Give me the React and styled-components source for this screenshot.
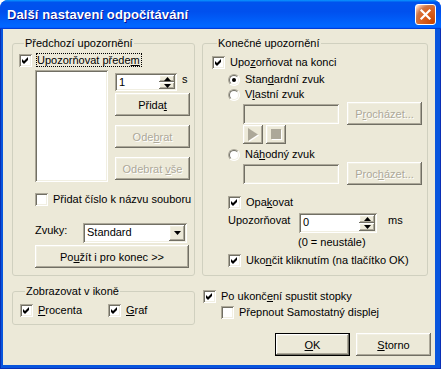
import React from 'react';
import styled, { createGlobalStyle, css } from 'styled-components';

const GlobalStyle = createGlobalStyle`
  html, body { margin: 0; padding: 0; background: #fff; }
  body {
    font-family: "Liberation Sans", Arial, sans-serif;
    font-size: 11px;
    color: #000;
  }
  * { box-sizing: border-box; }
`;

const raised = css`
  box-shadow: inset -1px -1px #716f64, inset 1px 1px #fff, inset -2px -2px #aca899, inset 2px 2px #f1efe2;
`;

const sunken = css`
  box-shadow: inset 1px 1px #aca899, inset -1px -1px #fff, inset 2px 2px #716f64, inset -2px -2px #f1efe2;
`;

const Window = styled.div`
  width: 441px;
  height: 369px;
  display: flex;
  flex-direction: column;
  border-radius: 8px 8px 0 0;
  overflow: hidden;
  background: #0855dd;
`;

const TitleBar = styled.div`
  height: 29px;
  flex: none;
  display: flex;
  align-items: center;
  justify-content: space-between;
  padding: 0 5px 0 7px;
  background: linear-gradient(180deg, #0997ff 0%, #0053ee 8%, #0050ee 40%, #0066ff 88%, #0066ff 93%, #005bff 95%, #003dd7 96%, #003dd7 100%);
`;

const TitleText = styled.span`
  color: #fff;
  font-weight: bold;
  font-size: 13px;
  letter-spacing: 0.1px;
  text-shadow: 1px 1px #0f1089;
`;

const CloseButton = styled.div`
  width: 21px;
  height: 21px;
  border: 1px solid #fff;
  border-radius: 3px;
  display: flex;
  align-items: center;
  justify-content: center;
  background: radial-gradient(circle at 90% 90%, #cc4600 0%, #dc6527 55%, #cd7546 70%, #ffccb2 90%, #fff 100%);
`;

const Frame = styled.div`
  flex: 1;
  display: flex;
  padding: 0 6px 4px 3px;
  box-shadow: inset 1px 0 #0a2fb5, inset -1px 0 #0a2fb5, inset 0 -1px #0a2fb5;
`;

const Client = styled.div`
  flex: 1;
  background: #ece9d8;
  padding: 8px 0 0 9px;
  display: flex;
  flex-direction: column;
`;

const Row = styled.div`
  display: flex;
  align-items: ${p => p.$align || 'stretch'};
  justify-content: ${p => p.$justify || 'flex-start'};
  margin-top: ${p => p.$mt || 0}px;
  margin-left: ${p => p.$ml || 0}px;
  gap: ${p => p.$gap || 0}px;
`;

const Column = styled.div`
  display: flex;
  flex-direction: column;
  width: ${p => (p.$w ? `${p.$w}px` : 'auto')};
  margin-top: ${p => p.$mt || 0}px;
  margin-left: ${p => p.$ml || 0}px;
`;

const Group = styled.fieldset`
  margin: 0;
  padding: ${p => p.$pad};
  width: ${p => p.$w}px;
  height: ${p => p.$h}px;
  min-width: 0;
  border: 1px solid #d0d0bf;
  border-radius: 3px;
  display: flex;
  flex-direction: column;
`;

const Legend = styled.legend`
  padding: 0 1px;
  margin-left: 5px;
  line-height: 13px;
`;

const U = styled.u`
  text-decoration: underline;
  text-underline-offset: 1px;
`;

const CheckRow = styled.div`
  display: flex;
  align-items: center;
  height: ${p => p.$h || 13}px;
  margin-top: ${p => p.$mt || 0}px;
  margin-left: ${p => p.$ml || 0}px;
  white-space: nowrap;
  line-height: 13px;
  width: ${p => (p.$w ? `${p.$w}px` : 'auto')};
  flex: none;
`;

const CheckText = styled.span`
  margin-left: 5px;
  ${p => p.$focus && css`
    margin-left: 4px;
    border: 1px dotted #000;
    padding: 0 1px 0 0;
    line-height: 12px;
  `}
`;

const Box = styled.span`
  width: 13px;
  height: 13px;
  flex: none;
  background: #fff;
  display: flex;
  align-items: center;
  justify-content: center;
  ${sunken};
`;

const RadioDot = styled.span`
  width: 12px;
  height: 12px;
  flex: none;
  border-radius: 50%;
  border: 1px solid;
  border-color: #aca899 #fff #fff #aca899;
  background: #fff;
  position: relative;
  &::before {
    content: '';
    position: absolute;
    inset: 0;
    border-radius: 50%;
    border: 1px solid;
    border-color: #716f64 #f1efe2 #f1efe2 #716f64;
  }
  &::after {
    content: '';
    position: absolute;
    left: 3px;
    top: 3px;
    width: 4px;
    height: 4px;
    border-radius: 50%;
    background: ${p => (p.$on ? '#000' : 'transparent')};
  }
`;

const ButtonFace = styled.div`
  width: ${p => p.$w || 75}px;
  height: ${p => p.$h || 23}px;
  flex: none;
  margin-top: ${p => p.$mt || 0}px;
  margin-left: ${p => p.$ml || 0}px;
  display: flex;
  align-items: center;
  justify-content: center;
  background: #ece9d8;
  white-space: nowrap;
  ${raised};
  ${p => p.$disabled && css`
    color: #aca899;
    text-shadow: 1px 1px #fff;
  `}
  ${p => p.$default && css`
    box-shadow: inset 0 0 0 1px #000, inset -2px -2px #716f64, inset 2px 2px #fff, inset -3px -3px #aca899, inset 3px 3px #f1efe2;
  `}
`;

const Button = ({ children, ...rest }) => (
  <ButtonFace {...rest}>
    <span>{children}</span>
  </ButtonFace>
);

const IconButton = styled(ButtonFace)``;

const Field = styled.div`
  width: ${p => p.$w}px;
  height: ${p => p.$h}px;
  flex: none;
  background: ${p => (p.$disabled ? '#ece9d8' : '#fff')};
  ${sunken};
  display: flex;
  align-items: stretch;
  padding: 2px;
  margin-left: ${p => p.$ml || 0}px;
  margin-top: ${p => p.$mt || 0}px;
`;

const FieldText = styled.span`
  flex: 1;
  padding: 1px 0 0 2px;
  line-height: 13px;
`;

const SpinCol = styled.div`
  width: 16px;
  display: flex;
  flex-direction: column;
`;

const SpinHalf = styled.div`
  flex: 1;
  display: flex;
  align-items: center;
  justify-content: center;
  background: #ece9d8;
  ${raised};
`;

const DropBtn = styled.div`
  width: 16px;
  display: flex;
  align-items: center;
  justify-content: center;
  background: #ece9d8;
  ${raised};
`;

const Label = styled.span`
  width: ${p => (p.$w ? `${p.$w}px` : 'auto')};
  margin-left: ${p => p.$ml || 0}px;
  margin-top: ${p => p.$mt || 0}px;
  line-height: 13px;
  white-space: nowrap;
  flex: none;
`;

const Arrow = ({ dir }) => (
  <svg width="7" height="4" viewBox="0 0 7 4">
    <path d={dir === 'up' ? 'M3.5 0 L7 4 L0 4 Z' : 'M0 0 L7 0 L3.5 4 Z'} fill="#000" />
  </svg>
);

const Check = ({ on, ml, mt, w, focus, children, h }) => (
  <CheckRow $ml={ml} $mt={mt} $w={w} $h={h}>
    <Box>
      {on && (
        <svg width="9" height="9" viewBox="0 0 9 9">
          <path d="M1 3 L3 5 L7 1 L7 4 L3 8 L1 6 Z" fill="#000" />
        </svg>
      )}
    </Box>
    <CheckText $focus={focus}>{children}</CheckText>
  </CheckRow>
);

const Radio = ({ on, ml, mt, children }) => (
  <CheckRow $ml={ml} $mt={mt}>
    <RadioDot $on={on} />
    <CheckText>{children}</CheckText>
  </CheckRow>
);

const Spinner = ({ w, h, value }) => (
  <Field $w={w} $h={h}>
    <FieldText>{value}</FieldText>
    <SpinCol>
      <SpinHalf><Arrow dir="up" /></SpinHalf>
      <SpinHalf><Arrow dir="down" /></SpinHalf>
    </SpinCol>
  </Field>
);

const MediaIcon = styled.svg`
  display: block;
`;

export default function App() {
  return (
    <>
      <GlobalStyle />
      <Window>
        <TitleBar>
          <TitleText>Další nastavení odpočítávání</TitleText>
          <CloseButton>
            <svg width="13" height="13" viewBox="0 0 13 13">
              <path d="M2.5 2.5 L10.5 10.5 M10.5 2.5 L2.5 10.5" stroke="#fff" strokeWidth="2.2" strokeLinecap="square" />
            </svg>
          </CloseButton>
        </TitleBar>
        <Frame>
          <Client>
            <Row $gap={7}>
              <Group $w={183} $h={239} $pad="3px 0 0 6px">
                <Legend>Předchozí upozornění</Legend>
                <Check on focus h={14}>Upozorňovat přede<U>m</U></Check>
                <Row $mt={3} $ml={16}>
                  <Field $w={73} $h={112} />
                  <Column $w={75} $ml={7}>
                    <Row $mt={3}>
                      <Spinner w={62} h={18} value="1" />
                      <Label $ml={5}>s</Label>
                    </Row>
                    <Button $mt={2}>Přida<U>t</U></Button>
                    <Button $mt={9} $disabled>Ode<U>b</U>rat</Button>
                    <Button $mt={9} $disabled>Odebrat <U>v</U>še</Button>
                  </Column>
                </Row>
                <Check ml={16} mt={11}>Přidat číslo k názvu souboru</Check>
                <Row $mt={17} $ml={16} $align="flex-start">
                  <Label $w={48} $mt={1}>Zvuky:</Label>
                  <Field $w={104} $h={20}>
                    <FieldText>Standard</FieldText>
                    <DropBtn><Arrow dir="down" /></DropBtn>
                  </Field>
                </Row>
                <Button $w={154} $mt={2} $ml={16}>Po<U>u</U>žít i pro konec &gt;&gt;</Button>
              </Group>
              <Group $w={226} $h={239} $pad="6px 0 0 9px">
                <Legend>Konečné upozornění</Legend>
                <Check on>Upo<U>z</U>orňovat na konci</Check>
                <Radio on ml={16} mt={4}>Stan<U>d</U>ardní zvuk</Radio>
                <Radio ml={16} mt={2}>V<U>l</U>astní zvuk</Radio>
                <Row $mt={1} $ml={31} $align="center">
                  <Field $w={96} $h={20} $disabled />
                  <Button $ml={8} $disabled>P<U>r</U>ocházet...</Button>
                </Row>
                <Row $ml={31} $gap={3}>
                  <IconButton $w={20} $h={19}>
                    <MediaIcon width="12" height="14" viewBox="0 0 12 14">
                      <path d="M2 1 L12 7.5 L2 14 Z" fill="#fff" />
                      <path d="M1 0 L11 6.5 L1 13 Z" fill="#aca899" />
                    </MediaIcon>
                  </IconButton>
                  <IconButton $w={20} $h={19}>
                    <MediaIcon width="11" height="11" viewBox="0 0 11 11">
                      <rect x="1" y="1" width="10" height="10" fill="#fff" />
                      <rect x="0" y="0" width="10" height="10" fill="#aca899" />
                    </MediaIcon>
                  </IconButton>
                </Row>
                <Radio ml={16} mt={4}>Ná<U>h</U>odný zvuk</Radio>
                <Row $mt={1} $ml={31} $align="center">
                  <Field $w={96} $h={20} $disabled />
                  <Button $ml={8} $disabled>Proc<U>h</U>ázet...</Button>
                </Row>
                <Check on ml={16} mt={11}>Opa<U>k</U>ovat</Check>
                <Row $mt={4} $ml={16} $align="flex-start">
                  <Label $w={71} $mt={1}>Upozorňovat</Label>
                  <Spinner w={78} h={20} value="0" />
                  <Label $ml={11} $mt={1}>ms</Label>
                </Row>
                <Label $ml={86} $mt={3}>(0 = neustále)</Label>
                <Check on ml={16} mt={5}>Uko<U>n</U>čit kliknutím (na tlačítko OK)</Check>
              </Group>
            </Row>
            <Row $mt={9}>
              <Group $w={183} $h={40} $pad="6px 0 0 7px">
                <Legend>Zobrazovat v ikoně</Legend>
                <Row>
                  <Check on w={88}><U>P</U>rocenta</Check>
                  <Check on><U>G</U>raf</Check>
                </Row>
              </Group>
              <Column $w={228} $ml={8} $mt={5}>
                <Check on>Po ukonč<U>e</U>ní spustit stopky</Check>
                <Check ml={18} mt={3}>Přepnout Samostatný displej</Check>
                <Row $mt={14} $gap={6} $justify="flex-end">
                  <Button $default><U>O</U>K</Button>
                  <Button><U>S</U>torno</Button>
                </Row>
              </Column>
            </Row>
          </Client>
        </Frame>
      </Window>
    </>
  );
}
